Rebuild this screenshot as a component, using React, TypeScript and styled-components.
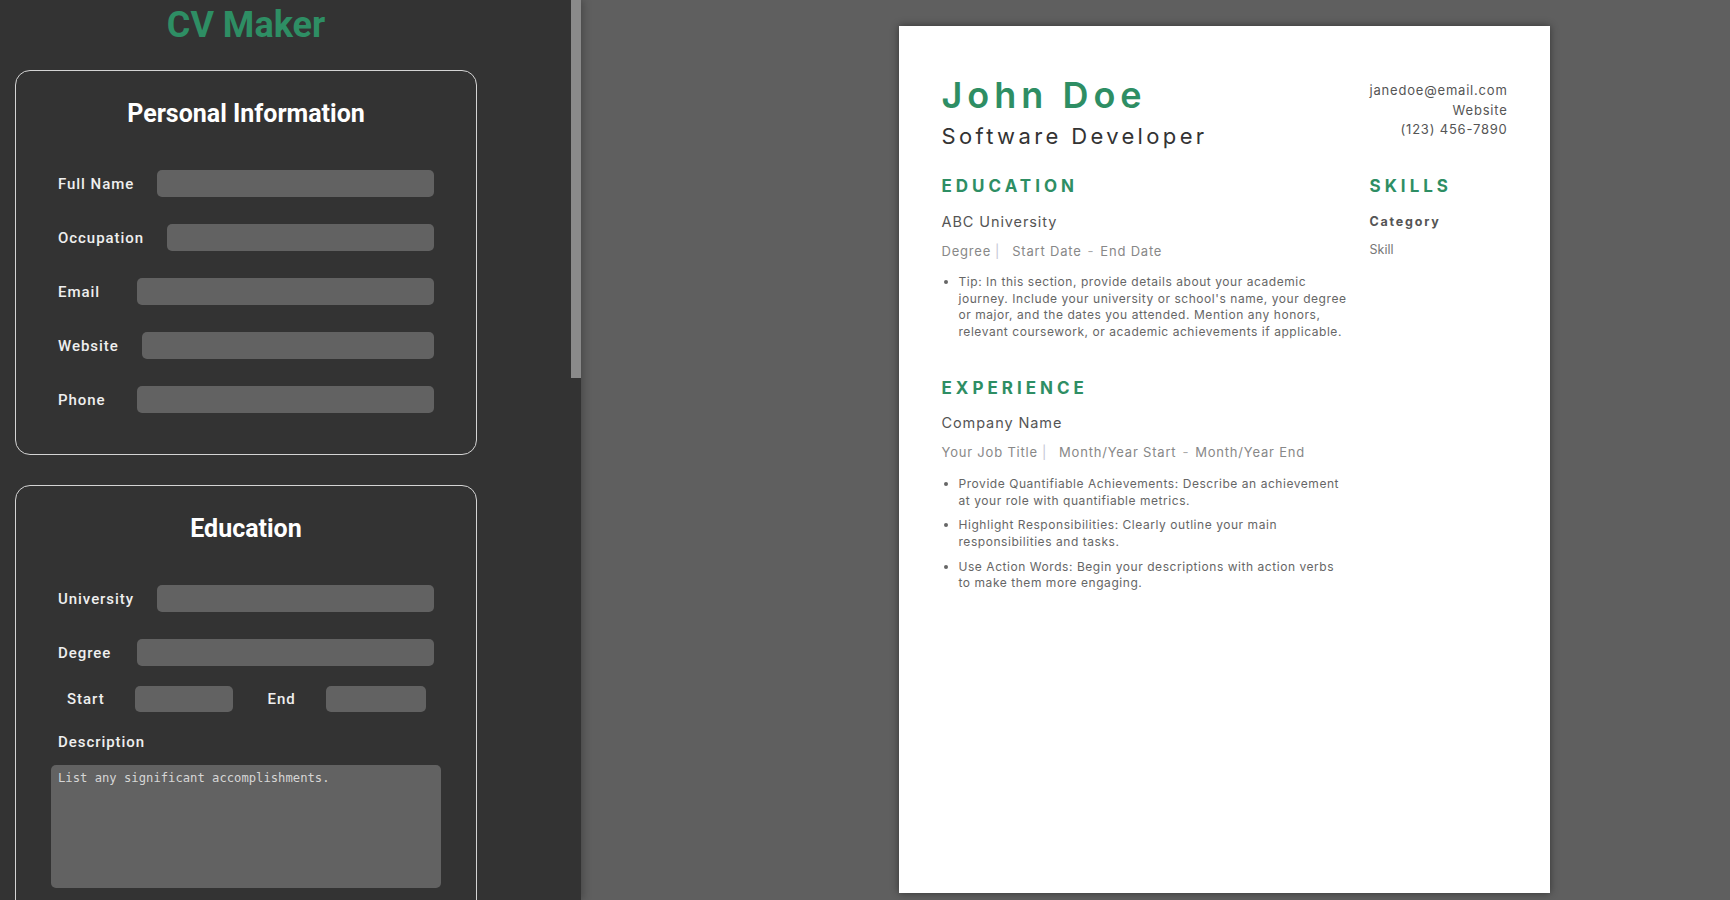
import React from "react";
import styled, { createGlobalStyle } from "styled-components";

const GlobalStyle = createGlobalStyle`
  html, body { margin: 0; padding: 0; height: 100%; overflow: hidden; }
  body { font-family: Roboto, "Liberation Sans", sans-serif; }
  *, *::before, *::after { box-sizing: border-box; }
`;

const GREEN = "#2e8e64";

const Layout = styled.div`
  display: flex;
  width: 100vw;
  height: 100vh;
`;

const Sidebar = styled.aside`
  flex: none;
  display: flex;
  width: 581px;
  height: 100%;
  background: #333333;
  position: relative;
  z-index: 1;
  box-shadow: 2px 0 8px rgba(0, 0, 0, 0.25);
`;

const FormPane = styled.div`
  width: 571px;
  height: 100%;
  overflow: hidden;
`;

const ScrollRail = styled.div`
  width: 10px;
  height: 100%;
  background: #333333;
`;

const ScrollThumb = styled.div`
  width: 10px;
  height: 378px;
  background: #8a8a8a;
`;

const SideInner = styled.div`
  width: 477px;
  padding: 5px 0 40px 15px;
`;

const AppTitle = styled.h1`
  margin: 0 0 25px;
  font-size: 36px;
  line-height: 40px;
  font-weight: 700;
  color: ${GREEN};
  text-align: center;
`;

const Card = styled.section`
  width: 462px;
  border: 1px solid #d4d4d4;
  border-radius: 15px;
  padding: 29px 42px 41px;
  margin-bottom: 30px;
`;

const CardTitle = styled.h2`
  margin: 0 0 42px;
  font-size: 25px;
  line-height: 28px;
  font-weight: 700;
  color: #ffffff;
  text-align: center;
`;

const Fields = styled.div`
  display: flex;
  flex-direction: column;
  gap: 27px;
`;

const FieldRow = styled.div`
  display: flex;
  align-items: center;
  gap: 23px;
  height: 27px;
`;

const Label = styled.label`
  min-width: 56px;
  font-size: 15px;
  font-weight: 500;
  letter-spacing: 0.95px;
  color: #efefef;
  white-space: nowrap;
`;

const TextInput = styled.input`
  flex: 1;
  min-width: 0;
  height: 27px;
  border: none;
  border-radius: 5px;
  background: #626262;
  outline: none;
  color: #fff;
`;

const DateRow = styled.div`
  display: flex;
  align-items: center;
  height: 26px;
  padding-left: 9px;
  margin-top: -7px;
`;

const DateLabel = styled.label<{ $ml?: number }>`
  margin-left: ${(p) => p.$ml ?? 0}px;
  font-size: 15px;
  font-weight: 500;
  letter-spacing: 0.95px;
  color: #efefef;
`;

const DateInput = styled.input<{ $w: number }>`
  width: ${(p) => p.$w}px;
  height: 26px;
  margin-left: 30px;
  border: none;
  border-radius: 5px;
  background: #626262;
  outline: none;
`;

const BlockLabel = styled.label`
  display: block;
  margin-top: -6px;
  font-size: 15px;
  line-height: 18px;
  font-weight: 500;
  letter-spacing: 0.95px;
  color: #efefef;
`;

const TextArea = styled.textarea`
  display: block;
  width: calc(100% + 14px);
  height: 123px;
  margin: -13px -7px 0;
  padding: 6px 7px;
  border: none;
  border-radius: 5px;
  background: #626262;
  resize: none;
  outline: none;
  font-family: "DejaVu Sans Mono", "Liberation Mono", monospace;
  font-size: 12.2px;
  line-height: 15px;
  color: #eee;
  &::placeholder { color: #d6d6d6; }
`;

const AddButton = styled.button`
  display: block;
  margin: 28px auto 0;
  padding: 8px 22px;
  border: none;
  border-radius: 5px;
  background: ${GREEN};
  color: #fff;
  font-family: Roboto, sans-serif;
  font-size: 15px;
  font-weight: 500;
`;

const Main = styled.main`
  flex: 1;
  height: 100%;
  background: #5f5f5f;
  padding: 26px 0 0 317.5px;
  overflow: hidden;
`;

const Paper = styled.article`
  width: 651px;
  height: 867px;
  background: #ffffff;
  box-shadow: 0 0 8px rgba(0, 0, 0, 0.45);
  padding: 47px 43px 0 43px;
  font-family: Inter, "Noto Sans", sans-serif;
`;

const PaperGrid = styled.div`
  display: grid;
  grid-template-columns: 408px 1fr;
  column-gap: 20px;
  row-gap: 26px;
  align-items: start;
`;

const Name = styled.h1`
  margin: 0;
  font-size: 36px;
  line-height: 44px;
  font-weight: 600;
  letter-spacing: 5px;
  color: ${GREEN};
`;

const JobTitle = styled.h2`
  margin: 6px 0 0;
  font-size: 22px;
  line-height: 26px;
  font-weight: 400;
  letter-spacing: 3.35px;
  color: #333;
`;

const Contact = styled.div`
  padding-top: 8px;
  text-align: right;
  font-size: 13px;
  line-height: 19.5px;
  letter-spacing: 0.8px;
  color: #555;
`;

const Section = styled.section<{ $mt?: number }>`
  margin-top: ${(p) => p.$mt ?? 0}px;
`;

const SectionHeading = styled.h3`
  margin: 0;
  font-size: 17px;
  line-height: 22px;
  font-weight: 700;
  letter-spacing: 4px;
  color: ${GREEN};
`;

const Org = styled.div`
  margin-top: 14.5px;
  font-size: 14.5px;
  line-height: 20px;
  letter-spacing: 0.9px;
  color: #555;
`;

const Meta = styled.div`
  margin-top: 9px;
  font-size: 13px;
  line-height: 20px;
  letter-spacing: 0.8px;
  color: #888;
`;

const Sep = styled.span`
  margin: 0 12px 0 4px;
  color: #c4c4d4;
`;

const Dash = styled.span`
  margin: 0 6px;
  color: #aaa;
`;

const Bullets = styled.ul`
  margin: 13.5px 0 0;
  padding-left: 17px;
  font-size: 12px;
  line-height: 16.7px;
  letter-spacing: 0.55px;
  color: #666;
`;

const Bullet = styled.li`
  margin-bottom: 8px;
  &:last-child { margin-bottom: 0; }
`;

const Category = styled.div`
  margin-top: 17px;
  font-size: 12.5px;
  line-height: 16px;
  font-weight: 700;
  letter-spacing: 1.8px;
  color: #555;
`;

const Skill = styled.div`
  margin-top: 12px;
  font-size: 12.5px;
  line-height: 16px;
  color: #777;
`;

export default function App() {
  return (
    <>
      <GlobalStyle />
      <Layout>
        <Sidebar>
          <FormPane>
            <SideInner>
              <AppTitle>CV Maker</AppTitle>
              <Card>
                <CardTitle>Personal Information</CardTitle>
                <Fields>
                  <FieldRow><Label>Full Name</Label><TextInput /></FieldRow>
                  <FieldRow><Label>Occupation</Label><TextInput /></FieldRow>
                  <FieldRow><Label>Email</Label><TextInput /></FieldRow>
                  <FieldRow><Label>Website</Label><TextInput /></FieldRow>
                  <FieldRow><Label>Phone</Label><TextInput /></FieldRow>
                </Fields>
              </Card>
              <Card>
                <CardTitle>Education</CardTitle>
                <Fields>
                  <FieldRow><Label>University</Label><TextInput /></FieldRow>
                  <FieldRow><Label>Degree</Label><TextInput /></FieldRow>
                  <DateRow>
                    <DateLabel>Start</DateLabel>
                    <DateInput $w={98} />
                    <DateLabel $ml={35}>End</DateLabel>
                    <DateInput $w={100} />
                  </DateRow>
                  <BlockLabel>Description</BlockLabel>
                  <TextArea placeholder="List any significant accomplishments." />
                </Fields>
                <AddButton>Add Education</AddButton>
              </Card>
              <Card>
                <CardTitle>Experience</CardTitle>
                <Fields>
                  <FieldRow><Label>Company</Label><TextInput /></FieldRow>
                  <FieldRow><Label>Job Title</Label><TextInput /></FieldRow>
                  <DateRow>
                    <DateLabel>Start</DateLabel>
                    <DateInput $w={98} />
                    <DateLabel $ml={35}>End</DateLabel>
                    <DateInput $w={100} />
                  </DateRow>
                  <BlockLabel>Description</BlockLabel>
                  <TextArea placeholder="Describe your responsibilities." />
                </Fields>
                <AddButton>Add Experience</AddButton>
              </Card>
            </SideInner>
          </FormPane>
          <ScrollRail>
            <ScrollThumb />
          </ScrollRail>
        </Sidebar>
        <Main>
          <Paper>
            <PaperGrid>
              <div>
                <Name>John Doe</Name>
                <JobTitle>Software Developer</JobTitle>
              </div>
              <Contact>
                <div>janedoe@email.com</div>
                <div>Website</div>
                <div>(123) 456-7890</div>
              </Contact>
              <div>
                <Section>
                  <SectionHeading>EDUCATION</SectionHeading>
                  <Org>ABC University</Org>
                  <Meta>
                    Degree<Sep>|</Sep>Start Date<Dash>-</Dash>End Date
                  </Meta>
                  <Bullets>
                    <Bullet>
                      Tip: In this section, provide details about your academic journey. Include your
                      university or school's name, your degree or major, and the dates you attended.
                      Mention any honors, relevant coursework, or academic achievements if applicable.
                    </Bullet>
                  </Bullets>
                </Section>
                <Section $mt={36}>
                  <SectionHeading>EXPERIENCE</SectionHeading>
                  <Org>Company Name</Org>
                  <Meta>
                    Your Job Title<Sep>|</Sep>Month/Year Start<Dash>-</Dash>Month/Year End
                  </Meta>
                  <Bullets>
                    <Bullet>
                      Provide Quantifiable Achievements: Describe an achievement at your role with
                      quantifiable metrics.
                    </Bullet>
                    <Bullet>
                      Highlight Responsibilities: Clearly outline your main responsibilities and tasks.
                    </Bullet>
                    <Bullet>
                      Use Action Words: Begin your descriptions with action verbs to make them more
                      engaging.
                    </Bullet>
                  </Bullets>
                </Section>
              </div>
              <Section>
                <SectionHeading>SKILLS</SectionHeading>
                <Category>Category</Category>
                <Skill>Skill</Skill>
              </Section>
            </PaperGrid>
          </Paper>
        </Main>
      </Layout>
    </>
  );
}
